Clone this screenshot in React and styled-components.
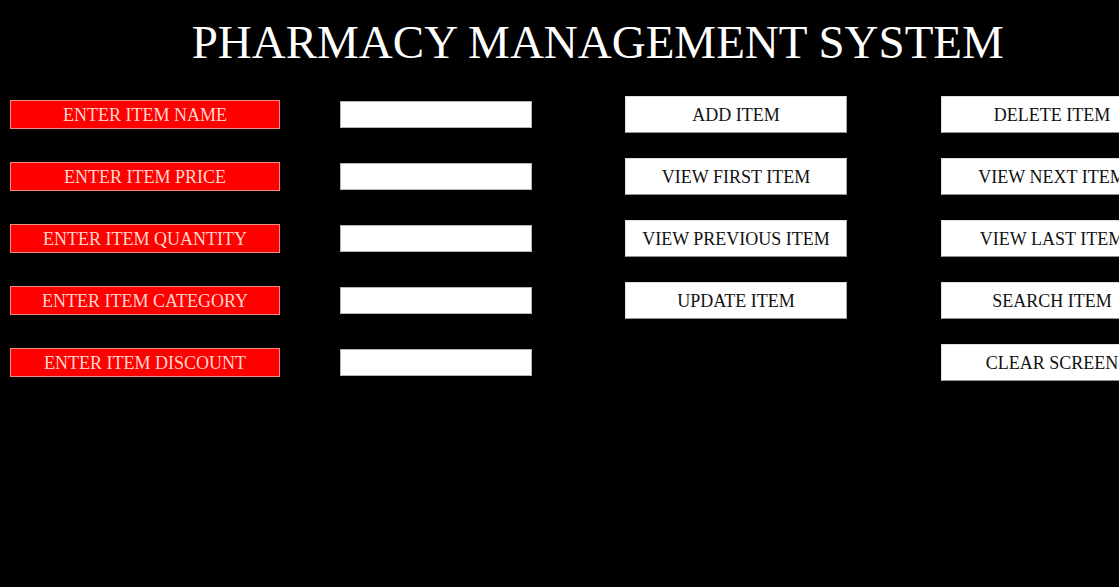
import React from "react";
import styled, { createGlobalStyle } from "styled-components";

const GlobalStyle = createGlobalStyle`
  *, *::before, *::after { box-sizing: border-box; }
  body {
    margin: 0;
    background: #000;
    font-family: "Liberation Serif", "Times New Roman", serif;
    font-size: 18px;
    line-height: 22px;
  }
`;

const Page = styled.main`
  min-height: 100vh;
  padding: 16px 0 32px 10px;
  overflow: hidden;
  color: #fff;
`;

const Title = styled.h1`
  margin: 0 0 28px;
  padding-left: 6%;
  font-size: 47px;
  line-height: 52px;
  font-weight: 400;
  text-align: center;
  white-space: nowrap;
`;

const Board = styled.div`
  display: flex;
  align-items: flex-start;
`;

const Fields = styled.form`
  flex: none;
  display: grid;
  gap: 25px;
  margin-right: 93px;
`;

const Field = styled.div`
  display: grid;
  grid-template-columns: 270px 192px;
  column-gap: 60px;
  align-items: center;
  height: 37px;
`;

const FieldLabel = styled.label`
  height: 29px;
  border: 1px solid #f08c84;
  background: #f00;
  color: #ffd6ce;
  line-height: 28px;
  text-align: center;
`;

const FieldInput = styled.input`
  width: 100%;
  height: 27px;
  padding: 2px 6px;
  border: 1px solid #b4b4b4;
  border-radius: 0;
  background: #fff;
  color: #000;
  font: inherit;
`;

const Actions = styled.div`
  flex: none;
  display: grid;
  grid-template-columns: 222px 222px;
  column-gap: 94px;
  row-gap: 25px;
`;

const ActionButton = styled.button`
  grid-column: ${({ $column }) => $column};
  height: 37px;
  padding: 0;
  border: 1px solid;
  border-color: #e0e0e0 #a8a8a8 #909090 #e0e0e0;
  border-radius: 0;
  background: #fff;
  color: #111;
  font: inherit;
  white-space: nowrap;
`;

const fields = [
  ["name", "ENTER ITEM NAME"],
  ["price", "ENTER ITEM PRICE"],
  ["quantity", "ENTER ITEM QUANTITY"],
  ["category", "ENTER ITEM CATEGORY"],
  ["discount", "ENTER ITEM DISCOUNT"],
];

const actions = [
  ["ADD ITEM", 1],
  ["DELETE ITEM", 2],
  ["VIEW FIRST ITEM", 1],
  ["VIEW NEXT ITEM", 2],
  ["VIEW PREVIOUS ITEM", 1],
  ["VIEW LAST ITEM", 2],
  ["UPDATE ITEM", 1],
  ["SEARCH ITEM", 2],
  ["CLEAR SCREEN", 2],
];

export default function App() {
  return (
    <Page>
      <GlobalStyle />
      <Title>PHARMACY MANAGEMENT SYSTEM</Title>
      <Board>
        <Fields>
          {fields.map(([id, label]) => (
            <Field key={id}>
              <FieldLabel htmlFor={id}>{label}</FieldLabel>
              <FieldInput id={id} name={id} type="text" />
            </Field>
          ))}
        </Fields>
        <Actions>
          {actions.map(([label, column]) => (
            <ActionButton key={label} type="button" $column={column}>
              {label}
            </ActionButton>
          ))}
        </Actions>
      </Board>
    </Page>
  );
}
